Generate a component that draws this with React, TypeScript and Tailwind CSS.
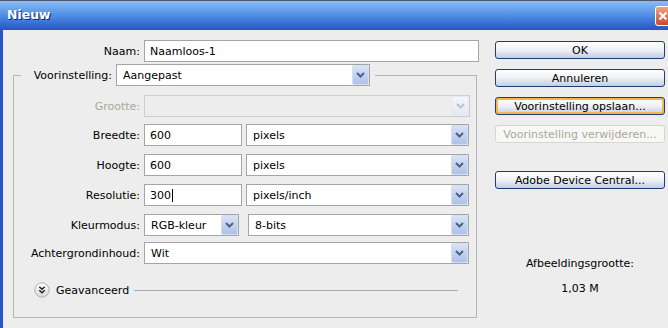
import React from 'react'

function Chevron({ disabled }: { disabled?: boolean }) {
  return (
    <svg width="9" height="6" viewBox="0 0 9 6">
      <path d="M1 1 L4.5 4.5 L8 1" fill="none" stroke={disabled ? '#b9c3d3' : '#4d6185'} strokeWidth="2" />
    </svg>
  )
}

function ArrowBtn({ disabled }: { disabled?: boolean }) {
  return (
    <div
      className={
        disabled
          ? 'w-[17px] h-full shrink-0 flex items-center justify-center border border-[#e4e9f2] bg-gradient-to-b from-[#f3f6fb] to-[#e3e9f3] rounded-[2px]'
          : 'w-[17px] h-full shrink-0 flex items-center justify-center border border-[#d4def2] bg-gradient-to-b from-[#d8e3f7] to-[#aec1e8] rounded-[2px]'
      }
    >
      <Chevron disabled={disabled} />
    </div>
  )
}

function Combo({ w, text, disabled }: { w: string; text?: string; disabled?: boolean }) {
  return (
    <div
      className={`${w} h-[22px] flex items-stretch border ${
        disabled ? 'border-[#cfcfc6] bg-[#ededed]' : 'border-[#a5a5a5] bg-white'
      }`}
    >
      <span className="flex-1 flex items-center pl-[6px] text-black">{text}</span>
      <ArrowBtn disabled={disabled} />
    </div>
  )
}

function Field({ w, children }: { w: string; children?: React.ReactNode }) {
  return (
    <div className={`${w} h-[22px] flex items-center border border-[#a5a5a5] bg-white pl-[5px] text-black`}>
      {children}
    </div>
  )
}

function Button({ label, focus, disabled }: { label: string; focus?: boolean; disabled?: boolean }) {
  if (disabled) {
    return (
      <div className="h-[18px] w-[170px] flex items-center justify-center rounded-[3px] border border-[#d6d6d0] bg-[#f7f7f5] text-[#aca899]">
        {label}
      </div>
    )
  }
  return (
    <div
      className={`h-[18px] w-[170px] flex items-center justify-center rounded-[3px] border border-[#1e3c78] bg-gradient-to-b from-[#ffffff] via-[#eef1f6] to-[#c3cee2] text-black ${
        focus ? 'shadow-[inset_0_0_0_2px_#f5b54a]' : ''
      }`}
    >
      {label}
    </div>
  )
}

function Row({ label, gray, mt, children }: { label: string; gray?: boolean; mt: string; children: React.ReactNode }) {
  return (
    <div className={`flex items-center ${mt}`}>
      <span className={`w-[126px] text-right ${gray ? 'text-[#aca899]' : 'text-black'}`}>{label}</span>
      <div className="ml-[4px] flex items-center">{children}</div>
    </div>
  )
}

export default function App() {
  return (
    <div className="w-[668px] h-[328px] overflow-hidden bg-[#ededed] flex flex-col font-['DejaVu_Sans',sans-serif] text-[11px] leading-none">
      <div className="h-[30px] shrink-0 flex items-center border-t border-[#4a5670] bg-gradient-to-b from-[#8cbcf2] via-[#4f8ee4] to-[#2654c4] pl-[7px]">
        <span className="text-white font-bold text-[12.5px] [text-shadow:1px_1px_#0a246a]">Nieuw</span>
        <div className="flex-1" />
        <div className="w-[16px] h-[20px] mr-[-3px] shrink-0 flex items-center justify-center rounded-l-[3px] border border-white bg-gradient-to-b from-[#f0a282] to-[#c9482c]">
          <svg width="10" height="10" viewBox="0 0 10 10">
            <path d="M1.5 1.5 L8.5 8.5 M8.5 1.5 L1.5 8.5" stroke="white" strokeWidth="2" />
          </svg>
        </div>
      </div>

      <div className="flex flex-1 border-l-[3px] border-[#2a55c8]">
        <div className="w-[477px] pt-[10px] flex flex-col">
          <div className="flex items-center">
            <span className="w-[137px] text-right text-black">Naam:</span>
            <div className="ml-[4px]">
              <Field w="w-[335px]">Naamloos-1</Field>
            </div>
          </div>

          <fieldset className="ml-[10px] mt-[2px] w-[464px] border border-[#b4b4b4] pb-[19px]">
            <legend className="ml-[7px]">
              <div className="flex items-center pr-[5px]">
                <span className="w-[91px] text-right text-black">Voorinstelling:</span>
                <div className="ml-[4px]">
                  <Combo w="w-[254px]" text="Aangepast" />
                </div>
              </div>
            </legend>

            <Row label="Grootte:" gray mt="mt-[9px]">
              <Combo w="w-[326px]" disabled />
            </Row>
            <Row label="Breedte:" mt="mt-[7px]">
              <Field w="w-[98px]">600</Field>
              <div className="ml-[4px]">
                <Combo w="w-[223px]" text="pixels" />
              </div>
            </Row>
            <Row label="Hoogte:" mt="mt-[8px]">
              <Field w="w-[98px]">600</Field>
              <div className="ml-[4px]">
                <Combo w="w-[223px]" text="pixels" />
              </div>
            </Row>
            <Row label="Resolutie:" mt="mt-[8px]">
              <Field w="w-[98px]">
                300
                <span className="ml-px w-px h-[13px] bg-black" />
              </Field>
              <div className="ml-[4px]">
                <Combo w="w-[223px]" text="pixels/inch" />
              </div>
            </Row>
            <Row label="Kleurmodus:" mt="mt-[8px]">
              <Combo w="w-[95px]" text="RGB-kleur" />
              <div className="ml-[9px]">
                <Combo w="w-[221px]" text="8-bits" />
              </div>
            </Row>
            <Row label="Achtergrondinhoud:" mt="mt-[6px]">
              <Combo w="w-[325px]" text="Wit" />
            </Row>

            <div className="mt-[18px] h-[16px] flex items-center pl-[20px] pr-[18px]">
              <svg width="16" height="16" viewBox="0 0 16 16">
                <defs>
                  <linearGradient id="adv" x1="0" y1="0" x2="0" y2="1">
                    <stop offset="0" stopColor="#ffffff" />
                    <stop offset="1" stopColor="#d9d9d9" />
                  </linearGradient>
                </defs>
                <circle cx="8" cy="8" r="7.2" fill="url(#adv)" stroke="#b0b0b0" />
                <path d="M5.3 4.8 L8 7.3 L10.7 4.8 M5.3 8.3 L8 10.8 L10.7 8.3" fill="none" stroke="#222" strokeWidth="1.4" />
              </svg>
              <span className="ml-[6px] text-black">Geavanceerd</span>
              <div className="flex-1 ml-[5px] h-px bg-[#a8a8a8]" />
            </div>
          </fieldset>
        </div>

        <div className="ml-[15px] w-[170px] pt-[11px] flex flex-col">
          <Button label="OK" />
          <div className="mt-[10px]">
            <Button label="Annuleren" />
          </div>
          <div className="mt-[10px]">
            <Button label="Voorinstelling opslaan..." focus />
          </div>
          <div className="mt-[10px]">
            <Button label="Voorinstelling verwijderen..." disabled />
          </div>
          <div className="mt-[28px]">
            <Button label="Adobe Device Central..." />
          </div>
          <div className="mt-[66px] h-[16px] flex items-center justify-center text-black">Afbeeldingsgrootte:</div>
          <div className="mt-[9px] h-[16px] flex items-center justify-center text-black">1,03 M</div>
        </div>
      </div>
    </div>
  )
}
